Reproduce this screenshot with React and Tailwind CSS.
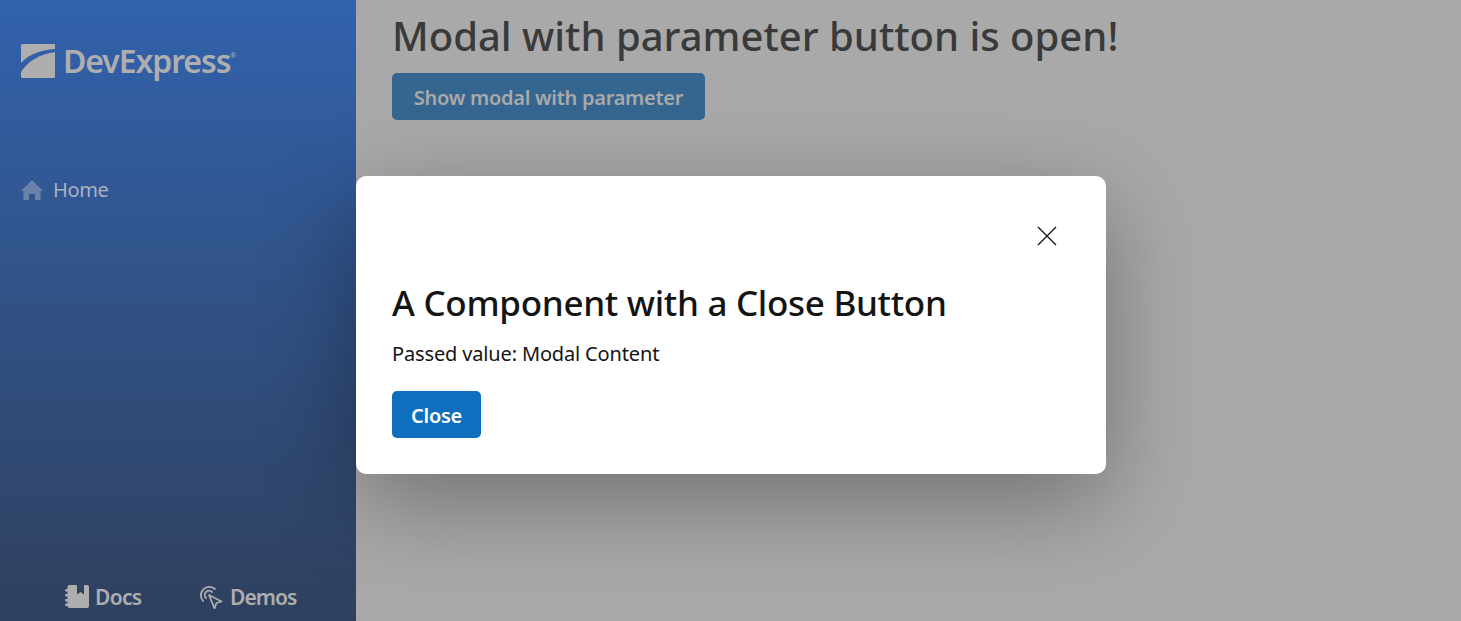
import React from 'react'

const font = { fontFamily: '"Noto Sans", "Open Sans", sans-serif' }

function Logo() {
  return (
    <div className="flex items-start h-[36px]">
      <svg width="35" height="35" viewBox="0 0 35 35" className="shrink-0">
        <path d="M1 1.500Q1 0 2.500 0H35V5C20 6 8 11 1 19Z" fill="#aeaeae" />
        <path d="M35 8V32.500Q35 34 33.500 34H2.500Q1 34 1 32.500V28C8 17 20 10 35 8Z" fill="#aeaeae" />
      </svg>
      <span className="ml-[8px] -mt-[2px] text-[32px] leading-[38px] font-semibold tracking-[-1.1px] text-[#aeaeae]">DevExpress</span>
      <span className="text-[7px] leading-none mt-[8px] text-[#aeaeae]">®</span>
    </div>
  )
}

function DocsIcon() {
  return (
    <svg width="24" height="24" viewBox="0 0 24 24" className="shrink-0">
      <path d="M2.500 2C2.500 .9 3.400 0 4.500 0H12V9.500L15.500 7 19 9.500V0H22C23.100 0 24 .9 24 2V21C24 22.100 23.100 23 22 23H4.500C3.400 23 2.500 22.100 2.500 21Z" fill="#aeaeae" />
      <rect x="0" y="4" width="4" height="2.400" rx="1.200" fill="#aeaeae" />
      <rect x="0" y="9" width="4" height="2.400" rx="1.200" fill="#aeaeae" />
      <rect x="0" y="14" width="4" height="2.400" rx="1.200" fill="#aeaeae" />
      <rect x="0" y="18.500" width="4" height="2.400" rx="1.200" fill="#aeaeae" />
    </svg>
  )
}

function DemosIcon() {
  return (
    <svg width="24" height="24" viewBox="0 0 24 24" fill="none" stroke="#aeaeae" strokeWidth="1.800" strokeLinejoin="round" strokeLinecap="round" className="shrink-0">
      <path d="M10 10 22.500 16.500 17.500 18 15.500 23.500Z" />
      <path d="M4 16A8.500 8.500 0 0 1 16 4" />
      <path d="M7 13A4.200 4.200 0 0 1 13 7" />
    </svg>
  )
}

function HomeIcon() {
  return (
    <svg width="22" height="20" viewBox="0 0 22 20" className="shrink-0">
      <path d="M11 0 22 11H19.500V20H14V14H8V20H2.500V11H0Z" fill="#6b83ab" />
    </svg>
  )
}

export default function App() {
  return (
    <div style={font} className="relative flex w-full h-[621px] overflow-hidden bg-[#a9a9a9]">
      <aside className="w-[356px] shrink-0 flex flex-col bg-gradient-to-b from-[#3162ad] to-[#2f405e]">
        <div className="pl-[20px] pt-[44px]">
          <Logo />
        </div>
        <div className="flex items-center pl-[21px] mt-[98px] h-[24px]">
          <HomeIcon />
          <span className="ml-[10px] text-[20px] text-[#a9b1c2] tracking-[-0.35px]">Home</span>
        </div>
        <div className="mt-auto flex items-center pl-[65px] pb-[8px]">
          <div className="flex items-center w-[134px]">
            <DocsIcon />
            <span className="ml-[6px] text-[21px] font-semibold tracking-[-0.7px] text-[#aeaeae]">Docs</span>
          </div>
          <div className="flex items-center">
            <DemosIcon />
            <span className="ml-[7px] text-[21px] font-semibold tracking-[-0.95px] text-[#aeaeae]">Demos</span>
          </div>
        </div>
      </aside>
      <main className="flex-1 pl-[36px]">
        <h1 className="text-[40px] leading-[48px] mt-[12px] font-medium text-[#3a3a3a]">Modal with parameter button is open!</h1>
        <button className="mt-[13px] h-[47px] w-[313px] pt-[2px] rounded-[5px] bg-[#356690] text-[20px] font-semibold tracking-[-0.27px] text-[#a9a9a9]">Show modal with parameter</button>
      </main>

      <div className="absolute left-[356px] top-[176px] w-[750px] h-[298px] rounded-[10px] bg-white shadow-[0_28px_96px_rgba(0,0,0,0.33)] px-[36px] flex flex-col">
        <div className="flex justify-end pt-[50px] pr-[13px]">
          <svg width="20" height="20" viewBox="0 0 20 20" fill="none" stroke="#1a1a1a" strokeWidth="1.400">
            <path d="M1 1 19 19M19 1 1 19" />
          </svg>
        </div>
        <h2 className="mt-[37px] text-[35px] leading-[40px] font-medium tracking-[-0.3px] text-[#141414]">A Component with a Close Button</h2>
        <p className="mt-[16px] text-[20px] leading-[30px] tracking-[-0.15px] text-[#141414]">Passed value: Modal Content</p>
        <button className="mt-[22px] h-[47px] w-[89px] pt-[3px] rounded-[5px] bg-[#106ebe] text-[20px] font-semibold tracking-[-0.3px] text-white">Close</button>
      </div>
    </div>
  )
}
